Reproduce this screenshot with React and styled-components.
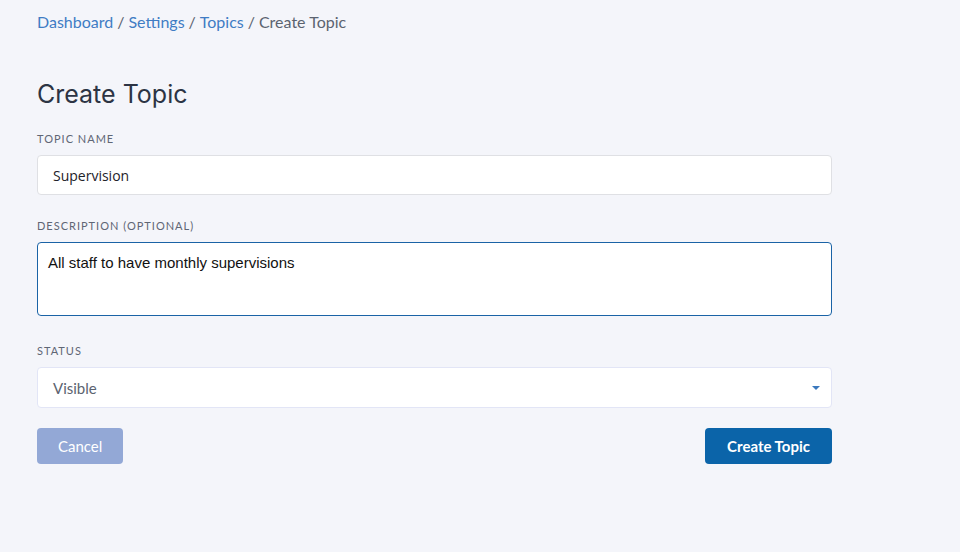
import { createGlobalStyle } from 'styled-components'
import styled from 'styled-components'

const Color = {
  Page: '#f4f5fa',
  Link: '#3f7cc4',
  Muted: '#5b6370',
  Heading: '#2c3444',
  Label: '#5f6675',
  Border: '#dfe0e4',
  SelectBorder: '#e2e5f6',
  Focus: '#1a63a6',
  Primary: '#0b64a9',
  Disabled: '#93a8d6',
  White: '#ffffff'
}

const GlobalStyle = createGlobalStyle`
  html, body {
    margin: 0;
    padding: 0;
    background: ${Color.Page};
  }
  * {
    box-sizing: border-box;
  }
`

const Layout = styled.main`
  min-height: 552px;
  padding: 12px 0 0 37px;
  background: ${Color.Page};
  font-family: Lato, 'Open Sans', sans-serif;
`

const Content = styled.section`
  width: 795px;
`

const Breadcrumb = styled.nav`
  font-size: 16px;
  line-height: 20px;
  color: ${Color.Muted};
`

const Crumb = styled.a`
  color: ${Color.Link};
  text-decoration: none;
`

const Separator = styled.span`
  margin: 0 4px;
  color: ${Color.Muted};
`

const Title = styled.h1`
  margin: 45px 0 0;
  font-family: Inter, sans-serif;
  font-size: 25px;
  font-weight: 400;
  line-height: 34px;
  color: ${Color.Heading};
`

const Field = styled.div`
  margin-top: ${({ $top }) => $top}px;
`

const Label = styled.label`
  display: block;
  margin-bottom: 9px;
  font-size: 11px;
  line-height: 14px;
  letter-spacing: 1px;
  text-transform: uppercase;
  color: ${Color.Label};
`

const Input = styled.input`
  display: block;
  width: 100%;
  height: 40px;
  padding: 0 15px;
  border: 1px solid ${Color.Border};
  border-radius: 4px;
  background: ${Color.White};
  font-family: 'Open Sans', sans-serif;
  font-size: 14px;
  color: #1e2229;
  outline: none;
`

const TextArea = styled.textarea`
  display: block;
  width: 100%;
  height: 74px;
  padding: 11px 10px;
  border: 1px solid ${Color.Focus};
  border-radius: 4px;
  background: ${Color.White};
  font-family: 'Liberation Sans', Arial, sans-serif;
  font-size: 15px;
  line-height: 17px;
  color: #111;
  resize: none;
  outline: none;
`

const SelectBox = styled.div`
  display: flex;
  align-items: center;
  justify-content: space-between;
  height: 41px;
  padding: 0 11px 0 15px;
  border: 1px solid ${Color.SelectBorder};
  border-radius: 4px;
  background: ${Color.White};
  font-size: 15px;
  color: ${Color.Muted};
`

const Caret = styled.span`
  width: 0;
  height: 0;
  border-left: 4px solid transparent;
  border-right: 4px solid transparent;
  border-top: 4px solid #3a78bd;
`

const Actions = styled.div`
  display: flex;
  justify-content: space-between;
  margin-top: 20px;
`

const Button = styled.button`
  height: 36px;
  padding: 0 ${({ $pad }) => $pad}px;
  border: none;
  border-radius: 4px;
  background: ${({ $primary }) => ($primary ? Color.Primary : Color.Disabled)};
  font-family: Lato, sans-serif;
  font-size: 15px;
  font-weight: ${({ $primary }) => ($primary ? 700 : 400)};
  color: ${Color.White};
  cursor: pointer;
`

function App() {
  return (
    <Layout>
      <GlobalStyle />
      <Content>
        <Breadcrumb>
          <Crumb href="#">Dashboard</Crumb>
          <Separator>/</Separator>
          <Crumb href="#">Settings</Crumb>
          <Separator>/</Separator>
          <Crumb href="#">Topics</Crumb>
          <Separator>/</Separator>
          <span>Create Topic</span>
        </Breadcrumb>
        <Title>Create Topic</Title>
        <Field $top={21}>
          <Label>Topic Name</Label>
          <Input defaultValue="Supervision" />
        </Field>
        <Field $top={24}>
          <Label>Description (optional)</Label>
          <TextArea defaultValue="All staff to have monthly supervisions" />
        </Field>
        <Field $top={28}>
          <Label>Status</Label>
          <SelectBox>
            <span>Visible</span>
            <Caret />
          </SelectBox>
        </Field>
        <Actions>
          <Button $pad={21}>Cancel</Button>
          <Button $primary $pad={22}>Create Topic</Button>
        </Actions>
      </Content>
    </Layout>
  )
}

export default App
